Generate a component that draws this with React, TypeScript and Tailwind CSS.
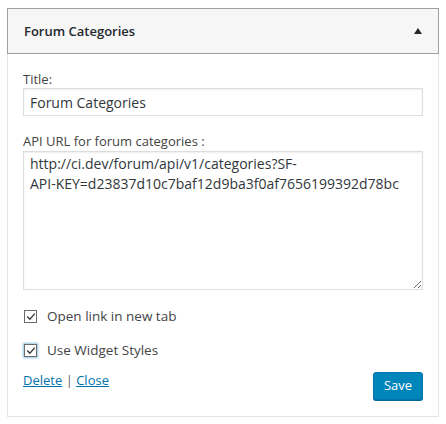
import React from 'react';

// word joiner keeps "API-KEY" together so the line breaks after "SF-"
const apiUrl =
  'http://ci.dev/forum/api/v1/categories?SF-API-\u2060KEY=d23837d10c7baf12d9ba3f0af7656199392d78bc';

function Check({ focused }: { focused?: boolean }) {
  return (
    <span
      className={`flex h-[13px] w-[13px] items-center justify-center border border-[#6b6b6b] bg-white ${
        focused ? 'shadow-[0_0_2px_1px_rgba(30,140,190,0.5)]' : ''
      }`}
    >
      <svg width="10" height="9" viewBox="0 0 10 9" fill="none">
        <path d="M1.2 4.6 L3.9 7.2 L8.8 1.6" stroke="#3a3a3a" strokeWidth="1.4" />
      </svg>
    </span>
  );
}

export default function App() {
  return (
    <div className="h-[424px] w-[446px] bg-white pl-[7px] pt-[8px] font-['Open_Sans',sans-serif] text-[#444]">
      <div className="w-[432px] h-[409px] border border-[#e5e5e5] bg-white">
        {/* Widget header */}
        <div className="-m-px flex h-[46px] items-center justify-between border border-[#a0a0a0] bg-[#f6f6f6] pl-[16px] pr-[16px]">
          <h3 className="pt-[1px] text-[13px] font-semibold text-[#23282d]">Forum Categories</h3>
          <svg width="8" height="6" viewBox="0 0 8 6">
            <path d="M0 6 L4 0 L8 6 Z" fill="#23282d" />
          </svg>
        </div>

        {/* Widget body */}
        <div className="px-[15px] pt-[17px] text-[13px]">
          <label className="block leading-[18px]">Title:</label>
          <input
            readOnly
            defaultValue="Forum Categories"
            className="h-[28px] w-full border border-[#ddd] px-[6px] text-[14px] text-[#32373c] outline-none shadow-[inset_0_1px_2px_rgba(0,0,0,0.07)]"
          />

          <label className="mt-[16px] block leading-[18px]">API URL for forum categories :</label>
          <textarea
            readOnly
            defaultValue={apiUrl}
            className="mt-[1px] block h-[139px] w-full border border-[#ddd] px-[6px] py-[2px] text-[14px] leading-[20px] text-[#32373c] outline-none shadow-[inset_0_1px_2px_rgba(0,0,0,0.07)]"
          />

          <div className="mt-[19px] flex flex-col gap-[20px]">
            <label className="flex items-center gap-[10px] leading-[14px] text-[13.5px]">
              <span className="ml-[1px]">
                <Check />
              </span>
              Open link in new tab
            </label>
            <label className="flex items-center gap-[10px] leading-[14px] text-[13.5px]">
              <span className="ml-[1px]">
                <Check focused />
              </span>
              Use Widget Styles
            </label>
          </div>

          <div className="mt-[14px] flex items-start justify-between">
            <div className="leading-[18px] text-[13px]">
              <a href="#" className="text-[#0073aa] underline">Delete</a>
              <span className="text-[#666]"> | </span>
              <a href="#" className="text-[#0073aa] underline">Close</a>
            </div>
            <button className="mt-[1px] h-[28px] w-[50px] rounded-[3px] border border-[#0073aa] bg-[#0085ba] text-[13px] text-white shadow-[0_1px_0_#006799]">
              Save
            </button>
          </div>
        </div>
      </div>
    </div>
  );
}
